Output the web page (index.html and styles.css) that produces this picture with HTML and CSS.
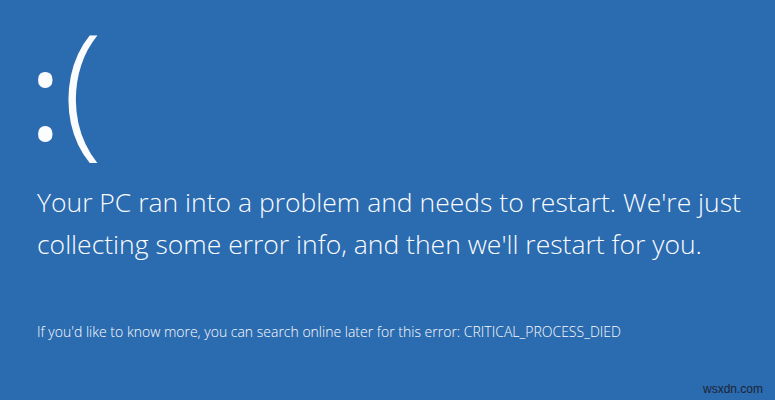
FILE: index.html
```html
<!DOCTYPE html>
<html>
<head>
<meta charset="utf-8">
<link rel="stylesheet" href="styles.css">
</head>
<body>
<main class="screen">
  <div class="face"><span class="colon">:</span><span class="paren">(</span></div>
  <p class="message">Your PC ran into a problem and needs to restart. We're just collecting some error info, and then we'll restart for you.</p>
  <p class="detail">If you'd like to know more, you can search online later for this error: CRITICAL_PROCESS_DIED</p>
  <span class="watermark">wsxdn.com</span>
</main>
</body>
</html>
```
FILE: styles.css
```css
html, body {
  margin: 0;
  padding: 0;
}
body {
  background: #2b6bb0;
  width: 775px;
  height: 400px;
  overflow: hidden;
}
.screen {
  position: relative;
  width: 775px;
  height: 400px;
  box-sizing: border-box;
  padding: 19px 0 0 37px;
  color: #fbfcfe;
  font-family: "Open Sans", "Noto Sans", sans-serif;
  font-weight: 300;
}
.face {
  display: flex;
  align-items: baseline;
  height: 162px;
  margin-left: -8px;
}
.colon {
  font-size: 124px;
  line-height: 130px;
  font-weight: 400;
}
.paren {
  font-size: 146px;
  line-height: 130px;
  margin-left: 1px;
}
.message {
  margin: 0;
  font-size: 26.5px;
  line-height: 42px;
  width: 730px;
}
.detail {
  margin: 58px 0 0 0;
  font-size: 14px;
  line-height: 18px;
}
.watermark {
  position: absolute;
  right: 12px;
  bottom: 4px;
  font-family: "Liberation Sans", Arial, sans-serif;
  font-weight: 400;
  font-size: 12px;
  color: #1c2533;
}
```
